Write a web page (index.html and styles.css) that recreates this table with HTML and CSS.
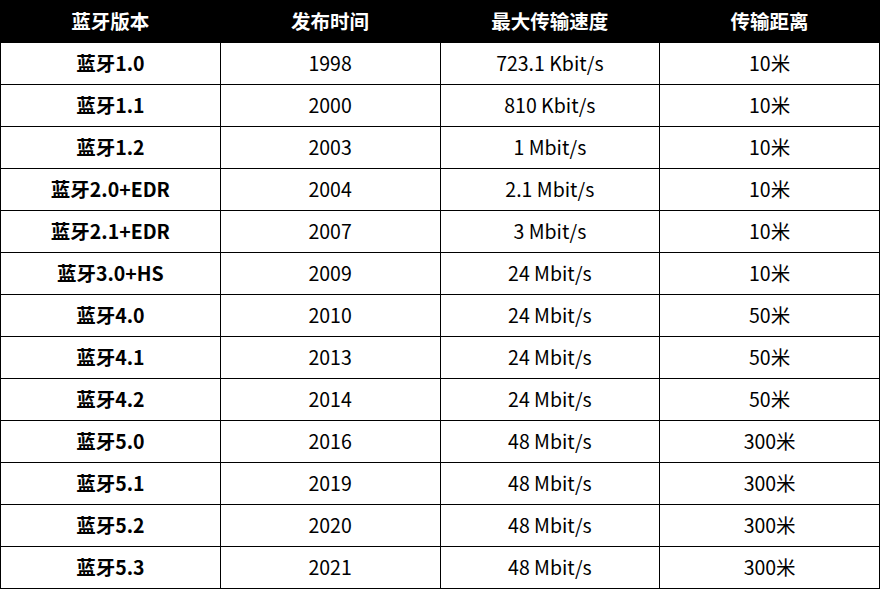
FILE: index.html
```html
<!DOCTYPE html>
<html lang="zh">
<head>
<meta charset="utf-8">
<link rel="stylesheet" href="styles.css">
</head>
<body>
<table class="bt">
  <thead>
    <tr><th>蓝牙版本</th><th>发布时间</th><th>最大传输速度</th><th>传输距离</th></tr>
  </thead>
  <tbody>
    <tr><td class="ver">蓝牙1.0</td><td>1998</td><td>723.1 Kbit/s</td><td>10米</td></tr>
    <tr><td class="ver">蓝牙1.1</td><td>2000</td><td>810 Kbit/s</td><td>10米</td></tr>
    <tr><td class="ver">蓝牙1.2</td><td>2003</td><td>1 Mbit/s</td><td>10米</td></tr>
    <tr><td class="ver">蓝牙2.0+EDR</td><td>2004</td><td>2.1 Mbit/s</td><td>10米</td></tr>
    <tr><td class="ver">蓝牙2.1+EDR</td><td>2007</td><td>3 Mbit/s</td><td>10米</td></tr>
    <tr><td class="ver">蓝牙3.0+HS</td><td>2009</td><td>24 Mbit/s</td><td>10米</td></tr>
    <tr><td class="ver">蓝牙4.0</td><td>2010</td><td>24 Mbit/s</td><td>50米</td></tr>
    <tr><td class="ver">蓝牙4.1</td><td>2013</td><td>24 Mbit/s</td><td>50米</td></tr>
    <tr><td class="ver">蓝牙4.2</td><td>2014</td><td>24 Mbit/s</td><td>50米</td></tr>
    <tr><td class="ver">蓝牙5.0</td><td>2016</td><td>48 Mbit/s</td><td>300米</td></tr>
    <tr><td class="ver">蓝牙5.1</td><td>2019</td><td>48 Mbit/s</td><td>300米</td></tr>
    <tr><td class="ver">蓝牙5.2</td><td>2020</td><td>48 Mbit/s</td><td>300米</td></tr>
    <tr><td class="ver">蓝牙5.3</td><td>2021</td><td>48 Mbit/s</td><td>300米</td></tr>
  </tbody>
</table>
</body>
</html>
```
FILE: styles.css
```css
html, body {
  margin: 0;
  padding: 0;
  background: #fff;
}
.bt {
  border-collapse: collapse;
  table-layout: fixed;
  width: 880px;
  font-family: "Noto Sans CJK SC", "Noto Sans", sans-serif;
  font-size: 19.5px;
  line-height: 1.2;
  color: #000;
}
.bt th {
  background: #000;
  color: #fff;
  font-weight: 700;
  height: 42px;
  padding: 0 0 2px;
  text-align: center;
  border: 1px solid #000;
  width: 219px;
  box-sizing: border-box;
}
.bt td {
  height: 42px;
  padding: 0 0 2px;
  text-align: center;
  border: 1px solid #000;
  box-sizing: border-box;
}
.bt td.ver {
  font-weight: 700;
}
```
